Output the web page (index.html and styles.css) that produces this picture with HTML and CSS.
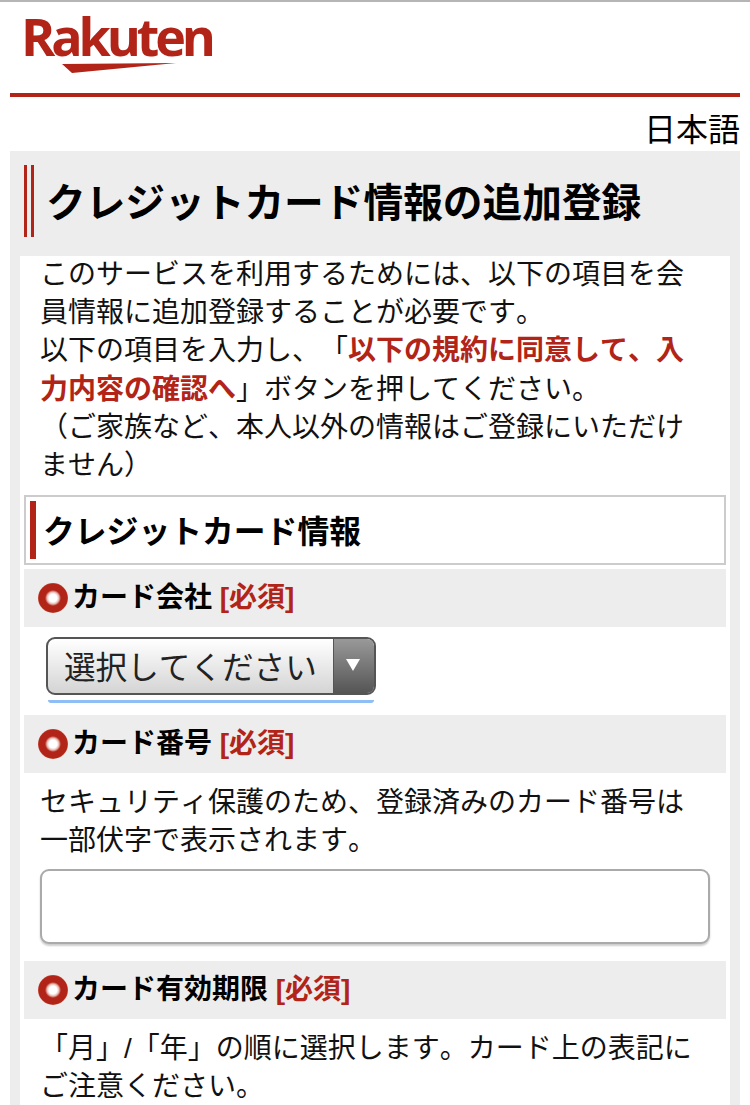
FILE: index.html
```html
<!DOCTYPE html>
<html lang="ja">
<head>
<meta charset="utf-8">
<title>クレジットカード情報の追加登録</title>
<link rel="stylesheet" href="styles.css">
</head>
<body>
<header class="header">
  <div class="logo">
    <span class="logo-text">Rakuten</span>
    <svg class="logo-swoosh" width="120" height="12" viewBox="0 0 120 12"><polygon points="0,1 114,0 10,10" fill="#b22418"/></svg>
  </div>
</header>
<div class="lang">日本語</div>
<main class="page">
  <h1 class="title">クレジットカード情報の追加登録</h1>
  <div class="panel">
    <p class="intro">このサービスを利用するためには、以下の項目を会員情報に追加登録することが必要です。<br>以下の項目を入力し、「<strong class="red">以下の規約に同意して、入力内容の確認へ</strong>」ボタンを押してください。<br>（ご家族など、本人以外の情報はご登録にいただけません）</p>
    <h2 class="section">クレジットカード情報</h2>
    <h3 class="label"><span class="dot"></span>カード会社 <span class="req">[必須]</span></h3>
    <div class="select-wrap">
      <div class="select"><span class="select-text">選択してください</span><span class="select-arrow"></span></div>
      <div class="focus-line"></div>
    </div>
    <h3 class="label"><span class="dot"></span>カード番号 <span class="req">[必須]</span></h3>
    <p class="note">セキュリティ保護のため、登録済みのカード番号は一部伏字で表示されます。</p>
    <div class="input-wrap"><div class="input"></div></div>
    <h3 class="label label-flush"><span class="dot"></span>カード有効期限 <span class="req">[必須]</span></h3>
    <p class="note note-tight">「月」/「年」の順に選択します。カード上の表記にご注意ください。</p>
  </div>
</main>
</body>
</html>
```
FILE: styles.css
```css
html, body { margin: 0; padding: 0; background: #fff; }
body {
  width: 750px;
  height: 1105px;
  overflow: hidden;
  font-family: "Liberation Sans", "Noto Sans CJK JP", sans-serif;
  color: #111;
  border-top: 2px solid #b5b5b5;
  box-sizing: border-box;
  text-spacing-trim: space-all;
  font-kerning: none;
}
.header {
  margin: 0 10px;
  width: 702px;
  height: 91px;
  padding: 0 14px;
  border-bottom: 4px solid #b22418;
}
.logo { padding-top: 6px; margin-left: -3px; }
.logo-text {
  display: block;
  font-family: "Open Sans", sans-serif;
  font-weight: 700;
  font-size: 52px;
  line-height: 56px;
  letter-spacing: -4.1px;
  color: #b22418;
  font-kerning: normal;
}
.logo-swoosh { display: block; margin: -1px 0 0 41px; }
.lang {
  text-align: right;
  font-size: 32px;
  line-height: 54px;
  height: 54px;
  margin: 0 10px;
  padding-top: 6px;
  box-sizing: border-box;
  color: #000;
}
.page {
  margin: 0 10px;
  background: #ededed;
  padding: 14px 10px 0;
  height: 960px;
  box-sizing: border-box;
}
.title {
  margin: 0 0 20px 4px;
  height: 72px;
  box-sizing: border-box;
  border-left: 10px double #b22418;
  padding: 2px 0 0 12px;
  font-size: 39.7px;
  line-height: 72px;
  font-weight: 700;
  white-space: nowrap;
  color: #000;
}
.panel {
  background: #fff;
  padding: 0 4px;
  height: 860px;
}
.intro, .note {
  margin: 0;
  font-size: 28px;
  line-height: 38.2px;
}
.intro { margin: -1px 0 0; padding: 0 16px; height: 239px; }
.red { color: #b22418; font-weight: 700; }
.section {
  margin: 0;
  height: 70px;
  border: 2px solid #ccc;
  box-sizing: border-box;
  padding: 4px;
  font-size: 31.8px;
  font-weight: 700;
  line-height: 62px;
  color: #000;
}
.section::before {
  content: "";
  float: left;
  width: 6px;
  height: 58px;
  background: #b22418;
  margin-right: 7px;
}
.label {
  margin: 4px 0 0;
  height: 58px;
  background: #ededed;
  display: flex;
  align-items: center;
  padding-left: 14px;
  font-size: 28px;
  font-weight: 700;
  line-height: 58px;
  white-space: pre;
  color: #000;
}
.label-flush { margin-top: 0; }
.req { color: #b22418; }
.dot {
  width: 30px;
  height: 30px;
  border-radius: 50%;
  background: radial-gradient(circle, #fff 0 4px, #e6b9b1 6px, #b22418 8px, #b22418 14px, #c4523f 15px);
  margin-right: 4px;
  flex: none;
}
.select-wrap { padding: 10px 0 0 22px; height: 84px; box-sizing: border-box; }
.select {
  width: 330px;
  height: 58px;
  box-sizing: border-box;
  border: 2px solid #555;
  border-radius: 9px;
  background: linear-gradient(#fff, #d4d4d4);
  display: flex;
  overflow: hidden;
}
.select-text {
  flex: 1;
  font-size: 31.6px;
  line-height: 58px;
  padding-left: 16px;
  color: #222;
  border-right: 1px solid #555;
  white-space: nowrap;
}
.select-arrow {
  flex: none;
  width: 40px;
  background: linear-gradient(#999, #555);
  position: relative;
}
.select-arrow::after {
  content: "";
  position: absolute;
  left: 12px;
  top: 20px;
  border-left: 7px solid transparent;
  border-right: 7px solid transparent;
  border-top: 12px solid #fff;
}
.focus-line {
  width: 326px;
  margin: 5px 0 0 2px;
  height: 3px;
  background: #8fbdf5;
  border-radius: 0 0 6px 6px;
}
.note { padding: 11px 16px 0; height: 88px; box-sizing: border-box; }
.note-tight { height: auto; }
.input-wrap { padding: 8px 16px 0; height: 100px; box-sizing: border-box; }
.input {
  height: 75px;
  box-sizing: border-box;
  background: #fff;
  border: 2px solid #aaa;
  border-radius: 9px;
  box-shadow: 0 2px 2px rgba(0,0,0,.2);
}
```
